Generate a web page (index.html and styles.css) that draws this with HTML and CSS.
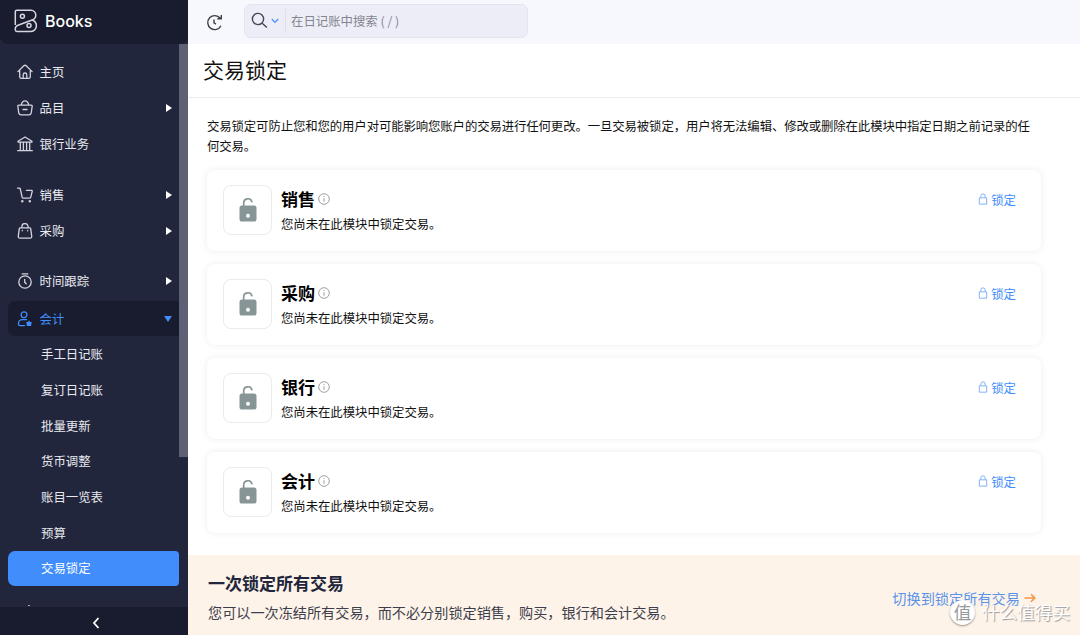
FILE: index.html
```
<!DOCTYPE html>
<html lang="zh-CN">
<head>
    <meta charset="UTF-8">
    <meta name="viewport" content="width=device-width, initial-scale=1.0">
    <title>交易锁定 | Books</title>
    <link rel="stylesheet" href="styles.css">
</head>
<body>
    <svg width="0" height="0" class="sprite">
        <symbol id="unlock" viewBox="0 0 18 24">
            <path d="M4.7 8.5V5a4.200 4.200 0 0 1 8.200-1.300" fill="none" stroke="#879596" stroke-width="1.7" stroke-linecap="round"/>
            <rect x=".5" y="7.500" width="17" height="16" rx="2.600" fill="#879596"/>
            <circle cx="9" cy="17.700" r="2" fill="#fff"/>
        </symbol>
        <symbol id="lock" viewBox="0 0 10 13">
            <path d="M1 5.200h8v6.900H1zM2.700 5V3.200a2.300 2.300 0 0 1 4.600 0V5"/>
        </symbol>
        <symbol id="info" viewBox="0 0 12 12">
            <circle cx="6" cy="6" r="5.300"/>
            <path d="M6 5.200v3.600M6 3v1"/>
        </symbol>
    </svg>

    <div class="app">
        <aside class="sidebar">
            <div class="brand">
                <svg width="24" height="24" viewBox="0 0 24 24">
                    <path d="M1.3 16V2.7Q1.3 1.2 2.8 1.2H17a5 5 0 0 1 4.8 5c0 2.5-1.3 3.9-3.7 4.8L4 16.2c-1.8.7-2.7 1.8-2.7 3.4v1.2q0 1.6 1.6 1.6H17a5.5 5.5 0 0 0 5.4-5.6c0-2.6-1.5-4.8-4.3-5.8"/>
                    <circle cx="8.4" cy="7.2" r="2"/>
                    <circle cx="15" cy="16.6" r="2"/>
                </svg>
                <span>Books</span>
            </div>

            <div class="nav-area">
                <nav class="nav">
                    <a class="nav-item">
                        <svg viewBox="0 0 16 16"><path d="M.9 7.6 6.8 1.8q1.2-1.1 2.4 0l5.9 5.8M2.7 6.4v6.3q0 1.7 1.7 1.7h7.2q1.7 0 1.7-1.7V6.4M6.2 14.2v-3.4a1.8 1.8 0 0 1 3.6 0v3.4"/></svg>
                        <span>主页</span>
                    </a>
                    <a class="nav-item">
                        <svg viewBox="0 0 16 16"><path d="M1.7 5.2h12.6q1 0 .9 1l-.9 6.3q-.3 2.3-2.5 2.3H4.2q-2.2 0-2.5-2.3L.8 6.2q-.1-1 .9-1zM4.3 5C4.8 2.3 6 .9 8 .9S11.2 2.3 11.7 5M6 9.5h4"/></svg>
                        <span>品目</span>
                        <i class="arrow"></i>
                    </a>
                    <a class="nav-item">
                        <svg viewBox="0 0 16 16"><path d="M1 5.2 8 1l7 4.2v.9H1zM3.3 6.2v8M6.4 6.2v8M9.6 6.2v8M12.7 6.2v8M.7 14.7h14.6"/></svg>
                        <span>银行业务</span>
                    </a>
                    <a class="nav-item group">
                        <svg viewBox="0 0 16 16"><path d="M.5 1.2h1.9q.7 0 .9.8l1.9 8.3q.2.9 1.1.9h6.2q1 0 1.2-.9l1.500-6q.2-.9-.7-.9H9.500"/><circle cx="5.3" cy="14.3" r=".6"/><circle cx="12.8" cy="14.3" r=".6"/></svg>
                        <span>销售</span>
                        <i class="arrow"></i>
                    </a>
                    <a class="nav-item">
                        <svg viewBox="0 0 16 16"><path d="M3.3 4.9h9.4q.8 0 1 .8l1 7.500q.2 2-1.700 2H3q-1.900 0-1.700-2l1-7.500q.2-.8 1-.8zM4.900 4.800V3.700a3.100 3.100 0 0 1 6.200 0v1.100M5.300 7.400v.4M10.700 7.400v.4"/></svg>
                        <span>采购</span>
                        <i class="arrow"></i>
                    </a>
                    <a class="nav-item group">
                        <svg viewBox="0 0 16 16"><circle cx="8" cy="9" r="6.2"/><path d="M5.2.9h5.6M7.7 6.3v2.9l1.5 1.6"/></svg>
                        <span>时间跟踪</span>
                        <i class="arrow"></i>
                    </a>
                    <a class="nav-item open">
                        <svg viewBox="0 0 16 16"><circle cx="7" cy="3.7" r="2.9"/><path d="M9.500 8.700H5.200a3.700 3.700 0 0 0-3.700 3.700v.8q0 1.400 1.400 1.400H7.500"/><path class="solid" d="m12 9.500 1.200 1.400 1.800.4-.8 1.700.1 1.900-2.300.1-2.300-.1.100-1.900-.8-1.700 1.800-.4z"/></svg>
                        <span>会计</span>
                        <i class="arrow down"></i>
                    </a>
                    <div class="sub">
                        <a>手工日记账</a>
                        <a>复订日记账</a>
                        <a>批量更新</a>
                        <a>货币调整</a>
                        <a>账目一览表</a>
                        <a>预算</a>
                        <a class="active">交易锁定</a>
                    </div>
                    <div class="next-item"></div>
                </nav>
                <div class="scrollbar"></div>
            </div>

            <div class="collapse">
                <svg width="8" height="12" viewBox="0 0 8 12"><path d="M6.5 1 2 6l4.500 5"/></svg>
            </div>
        </aside>

        <main class="main">
            <header class="topbar">
                <svg class="recent" width="17" height="17" viewBox="0 0 17 17">
                    <path d="M14.2 4.200A7 7 0 1 0 15 11.800M15.300.9v3.900h-3.900M8 5.400v3.500l1.900 1.200"/>
                </svg>
                <div class="search">
                    <svg width="17" height="17" viewBox="0 0 17 17"><circle cx="7" cy="7" r="5.6"/><path d="m11.2 11.2 4.7 4.300"/></svg>
                    <svg class="caret" width="8" height="6" viewBox="0 0 8 6"><path d="m.8 1 3.2 3.300L7.200 1"/></svg>
                    <span class="placeholder">在日记账中搜索 ( / )</span>
                </div>
            </header>

            <h1>交易锁定</h1>

            <section class="content">
                <p class="intro">交易锁定可防止您和您的用户对可能影响您账户的交易进行任何更改。一旦交易被锁定，用户将无法编辑、修改或删除在此模块中指定日期之前记录的任<br>何交易。</p>

                <div class="card">
                    <div class="card-icon"><svg width="18" height="24"><use href="#unlock"/></svg></div>
                    <div class="card-text">
                        <h3>销售 <svg width="12" height="12"><use href="#info"/></svg></h3>
                        <p>您尚未在此模块中锁定交易。</p>
                    </div>
                    <a class="lock"><svg width="10" height="12"><use href="#lock"/></svg>锁定</a>
                </div>
                <div class="card">
                    <div class="card-icon"><svg width="18" height="24"><use href="#unlock"/></svg></div>
                    <div class="card-text">
                        <h3>采购 <svg width="12" height="12"><use href="#info"/></svg></h3>
                        <p>您尚未在此模块中锁定交易。</p>
                    </div>
                    <a class="lock"><svg width="10" height="12"><use href="#lock"/></svg>锁定</a>
                </div>
                <div class="card">
                    <div class="card-icon"><svg width="18" height="24"><use href="#unlock"/></svg></div>
                    <div class="card-text">
                        <h3>银行 <svg width="12" height="12"><use href="#info"/></svg></h3>
                        <p>您尚未在此模块中锁定交易。</p>
                    </div>
                    <a class="lock"><svg width="10" height="12"><use href="#lock"/></svg>锁定</a>
                </div>
                <div class="card">
                    <div class="card-icon"><svg width="18" height="24"><use href="#unlock"/></svg></div>
                    <div class="card-text">
                        <h3>会计 <svg width="12" height="12"><use href="#info"/></svg></h3>
                        <p>您尚未在此模块中锁定交易。</p>
                    </div>
                    <a class="lock"><svg width="10" height="12"><use href="#lock"/></svg>锁定</a>
                </div>
            </section>

            <footer class="banner">
                <div>
                    <h2>一次锁定所有交易</h2>
                    <p>您可以一次冻结所有交易，而不必分别锁定销售，购买，银行和会计交易。</p>
                </div>
                <a class="switch">切换到锁定所有交易
                    <svg width="12" height="10" viewBox="0 0 12 10"><path d="M.5 5h10M7 1.2 10.8 5 7 8.8"/></svg>
                </a>
            </footer>
        </main>

        <div class="watermark">
            <span class="badge">值</span>
            <span>什么值得买</span>
        </div>
    </div>
</body>
</html>
```

FILE: styles.css
```
* {
    box-sizing: border-box;
}
body {
    margin: 0;
    font-family: "Noto Sans CJK SC", sans-serif;
    font-size: 12.4px;
    color: #111;
    background: #fff;
    overflow: hidden;
}
h1, h2, h3, p {
    margin: 0;
}
svg {
    fill: none;
    flex-shrink: 0;
}
.sprite {
    position: absolute;
}
.app {
    display: flex;
    width: 1080px;
    height: 635px;
    position: relative;
}

/* sidebar */
.sidebar {
    width: 188px;
    flex-shrink: 0;
    display: flex;
    flex-direction: column;
    background: #22263c;
    color: #e9eaf0;
}
.brand {
    height: 44px;
    padding: 0 0 3px 14px;
    display: flex;
    align-items: center;
    gap: 7px;
    background: #191c2e;
    border-radius: 0 0 8px 8px;
    font-family: Inter, sans-serif;
    font-size: 16px;
    font-weight: 500;
    color: #fff;
}
.brand svg {
    stroke: #d5d6df;
    stroke-width: 1.5;
}
.nav-area {
    height: 563px;
    display: flex;
    overflow: hidden;
}
.nav {
    width: 179px;
    padding: 10px 0 0 8px;
}
.nav-item {
    height: 36px;
    padding: 0 7px 0 9px;
    display: flex;
    align-items: center;
    gap: 6.5px;
}
.nav-item svg {
    width: 16px;
    height: 16px;
    stroke: #d2d4de;
    stroke-width: 1.3;
    stroke-linecap: round;
    stroke-linejoin: round;
}
.nav-item.group {
    margin-top: 14.5px;
}
.nav-item.open {
    height: 35px;
    margin-top: 2px;
    border-radius: 7px 0 0 7px;
    background: #191c2e;
    color: #408dfb;
}
.nav-item.open svg {
    stroke: #408dfb;
}
.nav-item .solid {
    fill: #408dfb;
    stroke: none;
}
.arrow {
    margin-left: auto;
    border-left: 6px solid #fff;
    border-top: 4px solid transparent;
    border-bottom: 4px solid transparent;
}
.arrow.down {
    border-top: 6px solid #408dfb;
    border-bottom: 0;
    border-left: 4px solid transparent;
    border-right: 4px solid transparent;
}
.sub {
    padding-top: 0.4px;
}
.sub a {
    height: 35.7px;
    padding-left: 33px;
    display: flex;
    align-items: center;
}
.sub .active {
    background: #408dfb;
    color: #fff;
    border-radius: 7px 4px 4px 7px;
}
/* top edge of the entry that scrolls in next */
.next-item {
    width: 2px;
    height: 1px;
    margin: 19px 0 0 20px;
    background: #a5a7b4;
}
.scrollbar {
    width: 9px;
    height: 413px;
    background: #5e6074;
}
.collapse {
    flex: 1;
    display: flex;
    align-items: center;
    justify-content: center;
    padding: 3px 0 0 3px;
    background: #191c2e;
}
.collapse svg {
    stroke: #fff;
    stroke-width: 1.8;
}

/* main */
.main {
    flex: 1;
    display: flex;
    flex-direction: column;
}
.topbar {
    height: 44px;
    padding: 0 0 3px 18px;
    display: flex;
    align-items: center;
    gap: 21px;
    background: #f7f7fe;
}
.recent {
    stroke: #3f4047;
    stroke-width: 1.4;
    margin-top: 3px;
}
.search {
    width: 284px;
    height: 34px;
    padding-left: 6px;
    display: flex;
    align-items: center;
    background: #ededf7;
    border: 1px solid #e4e4ef;
    border-radius: 7px;
}
.search svg {
    stroke: #444650;
    stroke-width: 1.4;
}
.search .caret {
    margin: 1px 6px 0 3px;
    stroke: #408dfb;
    stroke-width: 1.2;
}
.placeholder {
    height: 24px;
    line-height: 24px;
    padding-left: 5px;
    border-left: 1px solid #dfdfea;
    color: #84858f;
}
h1 {
    height: 54px;
    padding-left: 15px;
    line-height: 50px;
    font-size: 21px;
    font-weight: 400;
    border-bottom: 1px solid #ececf0;
}
.content {
    flex: 1;
    padding: 18px 39px 0 19px;
}
.intro {
    height: 53.5px;
    line-height: 20px;
    letter-spacing: -0.11px;
    white-space: nowrap;
}
.card {
    height: 81px;
    margin-bottom: 13.1px;
    padding: 0 25px 0 16px;
    display: flex;
    border-radius: 8px;
    box-shadow: 0 0 7px rgba(0, 0, 0, 0.08);
}
.card-icon {
    width: 49px;
    height: 50px;
    margin-top: 15px;
    display: flex;
    align-items: center;
    justify-content: center;
    border: 1px solid #ebebef;
    border-radius: 8px;
}
.card-text {
    margin: 16px auto 0 9px;
}
.card-text h3 {
    display: flex;
    align-items: center;
    gap: 3px;
    font-size: 17px;
    line-height: 25px;
    color: #000;
}
.card-text h3 svg {
    margin-top: 1px;
    stroke: #85868e;
    stroke-width: 0.8;
}
.card-text p {
    line-height: 26px;
    letter-spacing: -0.05px;
}
.lock {
    height: 20px;
    margin-top: 20px;
    display: flex;
    align-items: center;
    gap: 3px;
    color: #408dfb;
}
.lock svg {
    stroke: #69a4f8;
    stroke-width: 0.9;
    margin-bottom: 2px;
}

/* banner */
.banner {
    height: 80px;
    padding: 14px 44px 0 20px;
    display: flex;
    justify-content: space-between;
    background: #fef3e8;
    color: #3c3e4c;
}
.banner h2 {
    font-size: 17px;
    line-height: 27px;
    color: #21263c;
}
.banner p {
    font-size: 14.15px;
    line-height: 32px;
}
.switch {
    height: 28px;
    margin-top: 15px;
    display: flex;
    align-items: center;
    gap: 4px;
    font-size: 14.2px;
    color: #5a93e8;
}
.switch svg {
    stroke: #f59546;
    stroke-width: 1.6;
}
.watermark {
    position: absolute;
    left: 950px;
    top: 599px;
    display: flex;
    align-items: center;
    gap: 7px;
    font-size: 17.6px;
    line-height: 26px;
    color: #fff;
    text-shadow: 1px 1px 1px #999;
    white-space: nowrap;
}
.badge {
    width: 25px;
    height: 25px;
    line-height: 24px;
    text-align: center;
    border-radius: 50%;
    background: #fff;
    color: #999;
    box-shadow: 0 1px 2px rgba(0, 0, 0, 0.4);
    text-shadow: none;
}
```
